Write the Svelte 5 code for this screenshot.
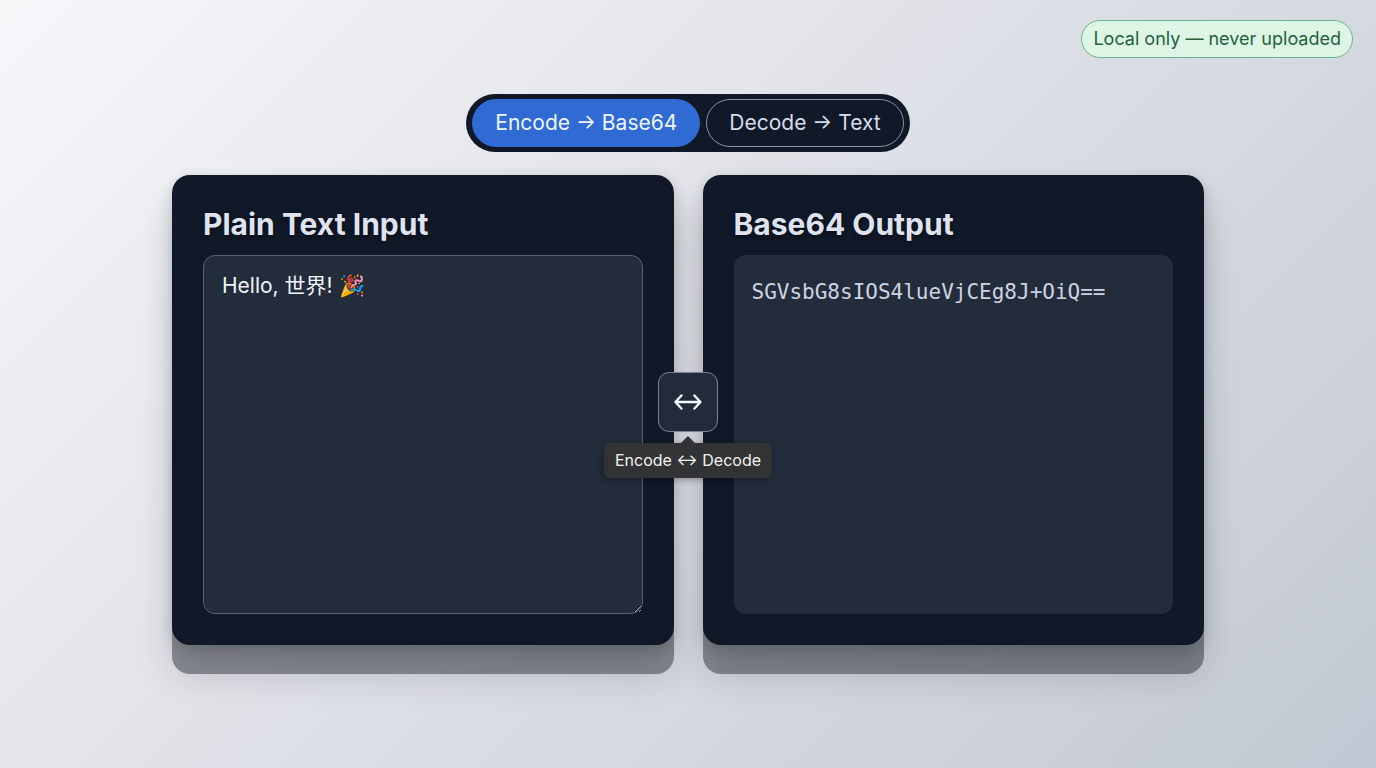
<script>
    let mode = $state("encode");
    let text = $state("Hello, 世界! 🎉");

    const toBase64 = (value) => {
        const bytes = new TextEncoder().encode(value);
        return btoa(String.fromCharCode(...bytes));
    };

    const fromBase64 = (value) => {
        try {
            const bytes = Uint8Array.from(atob(value), (c) => c.charCodeAt(0));
            return new TextDecoder().decode(bytes);
        } catch {
            return "";
        }
    };

    let output = $derived(mode === "encode" ? toBase64(text) : fromBase64(text));

    const setMode = (next) => {
        if (next === mode) return;
        text = output;
        mode = next;
    };
</script>

<div class="page">
    <header class="top">
        <span class="badge">Local only — never uploaded</span>
    </header>

    <main class="content">
        <div class="tabs">
            <button class="tab" class:active={mode === "encode"} onclick={() => setMode("encode")}>Encode → Base64</button>
            <button class="tab" class:active={mode === "decode"} onclick={() => setMode("decode")}>Decode → Text</button>
        </div>

        <div class="panels">
            <section class="panel">
                <label class="title" for="source">{mode === "encode" ? "Plain Text Input" : "Base64 Input"}</label>
                <textarea class="box source" id="source" spellcheck="false" bind:value={text}></textarea>
            </section>

            <section class="panel">
                <label class="title" for="result">{mode === "encode" ? "Base64 Output" : "Plain Text Output"}</label>
                <output class="box result" id="result">{output}</output>
            </section>

            <div class="swap">
                <button class="swap-btn" aria-label="Swap direction" aria-describedby="swap-tip" onclick={() => setMode(mode === "encode" ? "decode" : "encode")}>
                    <svg width="28" height="20" viewBox="0 0 28 20" fill="none" stroke="currentColor" stroke-width="2.4" stroke-linecap="round" stroke-linejoin="round">
                        <path d="M2 10H26M7.5 3.5L1.5 10L7.5 16.5M20.5 3.5L26.5 10L20.5 16.5" />
                    </svg>
                </button>
                <div class="tip" id="swap-tip" role="tooltip">Encode ↔ Decode</div>
            </div>
        </div>
    </main>
</div>

<style>
    :global(body) {
        margin: 0;
    }

    .page {
        min-height: 100vh;
        box-sizing: border-box;
        padding: 20px 23px 94px;
        background: linear-gradient(135deg, #f6f7f9 0%, #dcdfe5 50%, #c2c8d3 100%);
        font-family: Inter, "Noto Sans CJK SC", sans-serif;
    }

    .top {
        display: flex;
        justify-content: flex-end;
    }

    .badge {
        padding: 0 11px;
        border: 1px solid #6fb58c;
        border-radius: 19px;
        background: #dcf5e5;
        color: #27613f;
        font-size: 18px;
        line-height: 36px;
    }

    .content {
        display: flex;
        flex-direction: column;
        align-items: center;
        gap: 23px;
        padding-top: 36px;
    }

    .tabs {
        display: flex;
        gap: 6px;
        padding: 5px 6px;
        border-radius: 29px;
        background: #111828;
    }

    .tab {
        padding: 0 22px;
        border: 1px solid #8a92a5;
        border-radius: 24px;
        background: transparent;
        color: #d8dcea;
        font: inherit;
        font-size: 21px;
        line-height: 46px;
        cursor: pointer;
    }

    .tab.active {
        border-color: #2f6bd2;
        background: #2f6bd2;
        color: #eef5ff;
    }

    .panels {
        position: relative;
        display: flex;
        gap: 29px;
        width: 100%;
        max-width: 1032px;
    }

    .panel {
        flex: 1;
        display: flex;
        flex-direction: column;
        gap: 12px;
        min-width: 0;
        padding: 31px;
        border-radius: 18px;
        background: #111828;
        box-shadow:
            0 4px 14px rgba(0, 0, 0, 0.16),
            0 29px 0 rgba(20, 24, 32, 0.42),
            0 29px 36px rgba(20, 24, 32, 0.18);
    }

    .title {
        color: #dfe3f0;
        font-size: 30px;
        font-weight: 700;
        line-height: 37px;
        text-shadow: 0 2px 4px rgba(0, 0, 0, 0.5);
    }

    .box {
        display: block;
        box-sizing: border-box;
        width: 100%;
        height: 359px;
        margin: 0;
        border-radius: 12px;
        background: #232c3b;
    }

    .source {
        padding: 16px 18px;
        border: 1px solid #586174;
        color: #f1f4fa;
        font: inherit;
        font-size: 21px;
        line-height: 28px;
        outline: none;
        resize: vertical;
    }

    .result {
        padding: 22px 18px;
        color: #ccd3e1;
        font-family: "DejaVu Sans Mono", monospace;
        font-size: 21px;
        line-height: 30px;
        overflow-wrap: anywhere;
    }

    /* sits over the gutter between the two panels */
    .swap {
        position: absolute;
        top: 197px;
        left: 50%;
        display: flex;
        flex-direction: column;
        align-items: center;
        gap: 11px;
        transform: translateX(-50%);
    }

    .swap-btn {
        display: flex;
        align-items: center;
        justify-content: center;
        width: 60px;
        height: 60px;
        padding: 0;
        border: 1px solid #7b8394;
        border-radius: 11px;
        background: #222b3a;
        color: #f4f7fb;
        cursor: pointer;
    }

    .tip {
        position: relative;
        padding: 0 11px;
        border-radius: 6px;
        background: #323335;
        box-shadow: 0 2px 6px rgba(0, 0, 0, 0.3);
        color: #f1f1f2;
        font-size: 16px;
        line-height: 35px;
        white-space: nowrap;
    }

    .tip::before {
        content: "";
        position: absolute;
        bottom: 100%;
        left: 50%;
        margin-left: -7px;
        border: 7px solid transparent;
        border-top-width: 0;
        border-bottom-color: #323335;
    }
</style>
